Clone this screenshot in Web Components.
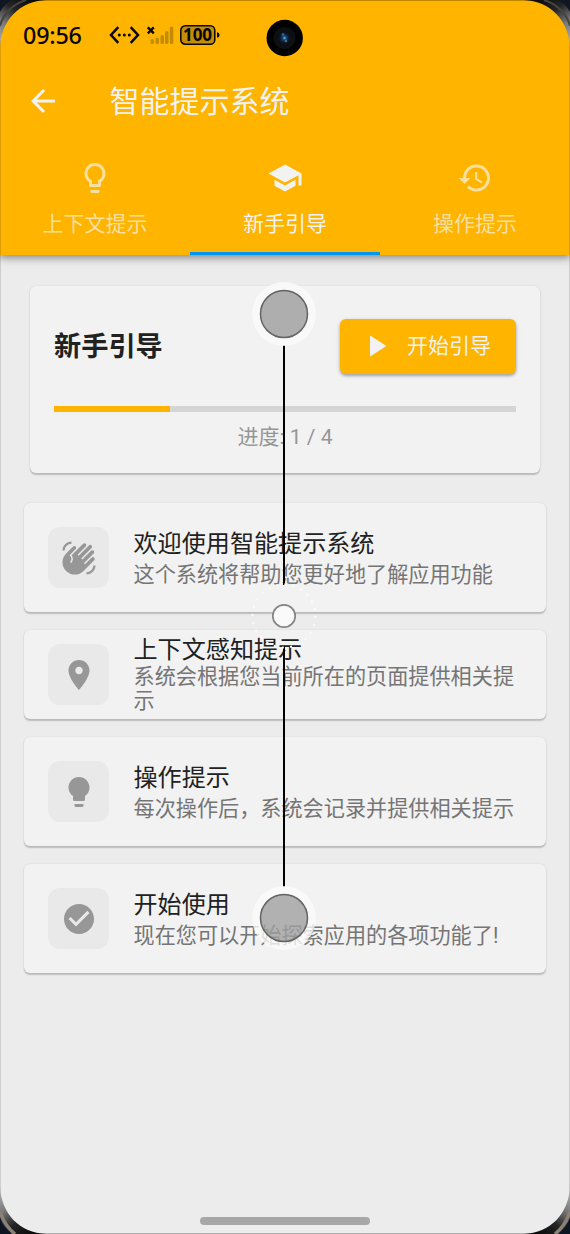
<!DOCTYPE html>
<html lang="zh-CN">
<head>
<meta charset="utf-8">
<title>智能提示系统</title>
<style>
html, body { margin: 0; height: 100%; }
body { font-family: Roboto, "Noto Sans CJK SC", sans-serif; background: #ececec; overflow: hidden; }
</style>
</head>
<body>
<phone-screen></phone-screen>
<script>
const define = (name, html) => {
  const template = document.createElement('template');
  template.innerHTML = html;
  customElements.define(name, class extends HTMLElement {
    constructor() {
      super();
      this.attachShadow({ mode: 'open' }).append(template.content.cloneNode(true));
    }
  });
};

const ICONS = {
  back: 'M20 11H7.83l5.59-5.59L12 4l-8 8 8 8 1.41-1.41L7.83 13H20v-2z',
  bulbOutline: 'M9 21c0 .55.45 1 1 1h4c.55 0 1-.45 1-1v-1H9v1zm3-19C8.14 2 5 5.14 5 9c0 2.38 1.19 4.47 3 5.74V17c0 .55.45 1 1 1h6c.55 0 1-.45 1-1v-2.26c1.81-1.27 3-3.36 3-5.74 0-3.86-3.14-7-7-7zm2.850 11.1l-.85.6V16h-4v-2.3l-.85-.6C7.8 12.16 7 10.63 7 9c0-2.76 2.24-5 5-5s5 2.24 5 5c0 1.63-.8 3.16-2.150 4.1z',
  school: 'M5 13.18v4L12 21l7-3.82v-4L12 17l-7-3.82zM12 3L1 9l11 6 9-4.91V17h2V9L12 3z',
  history: 'M13 3c-4.97 0-9 4.03-9 9H1l3.89 3.89.07.14L9 12H6c0-3.87 3.13-7 7-7s7 3.13 7 7-3.13 7-7 7c-1.93 0-3.68-.79-4.94-2.06l-1.42 1.42C8.27 19.99 10.51 21 13 21c4.97 0 9-4.03 9-9s-4.03-9-9-9zm-1 5v5l4.28 2.54.72-1.21-3.5-2.08V8H12z',
  play: 'M8 5v14l11-7z',
  wave: 'M23,17c0,3.31-2.69,6-6,6v-1.5c2.48,0,4.5-2.02,4.5-4.5H23z M1,7c0-3.31,2.69-6,6-6v1.5C4.52,2.5,2.5,4.52,2.5,7H1z M8.01,4.32l-4.6,4.6c-3.22,3.22-3.22,8.45,0,11.67s8.45,3.22,11.67,0l7.07-7.07c0.49-0.49,0.49-1.28,0-1.77c-0.49-0.49-1.28-0.49-1.77,0l-4.42,4.42l-0.71-0.71l6.54-6.54c0.49-0.49,0.49-1.28,0-1.77s-1.28-0.49-1.77,0l-5.83,5.83l-0.71-0.71l6.89-6.89c0.49-0.49,0.49-1.28,0-1.77s-1.28-0.49-1.77,0l-6.89,6.89L11.02,9.8l5.48-5.48c0.49-0.49,0.49-1.28,0-1.77s-1.28-0.49-1.77,0l-7.62,7.62c1.22,1.57,1.11,3.84-0.33,5.28l-0.71-0.71c1.17-1.17,1.17-3.07,0-4.24l-0.35-0.35l4.07-4.07c0.49-0.49,0.49-1.28,0-1.77C9.29,3.83,8.5,3.83,8.01,4.32z',
  place: 'M12 2C8.13 2 5 5.13 5 9c0 5.25 7 13 7 13s7-7.75 7-13c0-3.87-3.13-7-7-7zm0 9.5c-1.38 0-2.5-1.12-2.5-2.5s1.12-2.5 2.5-2.5 2.5 1.12 2.5 2.5-1.12 2.5-2.5 2.5z',
  bulb: 'M9 21c0 .55.45 1 1 1h4c.55 0 1-.45 1-1v-1H9v1zm3-19C8.14 2 5 5.14 5 9c0 2.38 1.19 4.47 3 5.74V17c0 .55.45 1 1 1h6c.55 0 1-.45 1-1v-2.26c1.81-1.27 3-3.36 3-5.74 0-3.86-3.14-7-7-7z',
  check: 'M12 2C6.48 2 2 6.48 2 12s4.48 10 10 10 10-4.48 10-10S17.52 2 12 2zm-2 15l-5-5 1.41-1.41L10 14.17l7.59-7.59L19 8l-9 9z'
};

customElements.define('md-icon', class extends HTMLElement {
  constructor() {
    super();
    this.attachShadow({ mode: 'open' }).innerHTML =
      `<style>:host{display:block;width:36px;height:36px;flex:none}svg{display:block;width:100%;height:100%;fill:currentColor}</style>
       <svg viewBox="0 0 24 24"><path d="${ICONS[this.getAttribute('name')]}"/></svg>`;
  }
  static get observedAttributes() { return ['name']; }
  attributeChangedCallback() {
    this.shadowRoot.querySelector('path').setAttribute('d', ICONS[this.getAttribute('name')]);
  }
});

define('status-bar', `
<style>
:host{display:flex;height:72px;box-sizing:border-box;padding:22px 0 0 23px;color:#080600}
.time{font:500 23.300px/26px "Noto Sans",sans-serif;width:86px;letter-spacing:-.2px}
svg{display:block;flex:none}
.net{margin-top:2px}
.sig{margin:3px 0 0 7px}
.bat{position:relative;width:39px;height:21px;margin:3px 0 0 6px}
.bat b{position:absolute;left:0;top:0;width:35px;text-align:center;font:700 17px/20px "Noto Sans",sans-serif}
.cam{position:absolute;left:266px;top:19px}
</style>
<div class="time">09:56</div>
<svg class="net" width="31" height="22" viewBox="0 0 31 22" fill="none" stroke="#080600" stroke-width="2.5"><path d="M9.300 3.200 2 11l7.300 7.800M21.700 3.200 29 11l-7.300 7.800"/><g fill="#080600" stroke="none"><circle cx="10.300" cy="11" r="1.500"/><circle cx="15.300" cy="11" r="1.500"/><circle cx="20.300" cy="11" r="1.500"/></g></svg>
<svg class="sig" width="27" height="20" viewBox="0 0 27 20" fill="#c38b03"><path d="M.8 2.300 6.800 8.300M6.800 2.300.8 8.300" stroke="#080600" stroke-width="2.400"/><rect x="3.500" y="14" width="3.500" height="5" rx="1.600"/><rect x="8.500" y="12.500" width="3.500" height="6.500" rx="1.600"/><rect x="13.500" y="10" width="3.500" height="9" rx="1.600"/><rect x="18" y="6" width="3.500" height="13" rx="1.600"/><rect x="22.800" y="1.500" width="3.500" height="17.500" rx="1.600"/></svg>
<div class="bat"><svg width="40" height="20" viewBox="0 0 40 20"><rect x=".8" y=".8" width="34" height="18.400" rx="4.500" fill="#c58d06" stroke="#080600" stroke-width="1.500"/><path d="M37 7.200q2.600.3 2.600 2.800t-2.600 2.800z" fill="#080600"/></svg><b>100</b></div>
<svg class="cam" width="38" height="38" viewBox="0 0 38 38"><defs><radialGradient id="g"><stop offset="0" stop-color="#8cc4ef"/><stop offset=".25" stop-color="#1d4d79"/><stop offset=".65" stop-color="#0b1c30"/><stop offset="1" stop-color="#0c0e13"/></radialGradient></defs><circle cx="18.700" cy="19" r="18.200" fill="#000"/><circle cx="18.500" cy="19" r="11" fill="#0d0f13"/><circle cx="18.500" cy="19" r="6.500" fill="url(#g)"/><circle cx="17" cy="15.500" r="1.300" fill="#326c9b"/><circle cx="20" cy="22" r="1.200" fill="#40749a"/></svg>
`);

define('title-bar', `
<style>
:host{display:flex;align-items:center;height:58px;margin-bottom:2px;padding-left:24.500px;color:#f2f2f2}
span{font-size:30px;line-height:40px;margin-left:49px;padding-top:2px}
</style>
<md-icon name="back"></md-icon><span><slot></slot></span>
`);

define('nav-tab', `
<style>
:host{display:flex;flex-direction:column;align-items:center;flex:1;height:108px;box-sizing:border-box;padding-top:13px;color:#f7dfa0;font-size:21px;line-height:30px;border-bottom:3px solid transparent}
:host([active]){color:#f2f2f2;border-color:#0095f0}
div{margin-top:13px}
</style>
<slot name="icon"></slot><div><slot></slot></div>
`);

define('app-header', `
<style>
:host{display:flex;flex-direction:column;height:255px;background:#ffb400;box-shadow:0 3px 6px rgba(0,0,0,.28),0 5px 9px rgba(0,0,0,.13);position:relative}
nav{display:flex;margin-top:15px}
</style>
<status-bar></status-bar>
<title-bar>智能提示系统</title-bar>
<nav>
<nav-tab><md-icon slot="icon" name="bulbOutline"></md-icon>上下文提示</nav-tab>
<nav-tab active><md-icon slot="icon" name="school"></md-icon>新手引导</nav-tab>
<nav-tab><md-icon slot="icon" name="history"></md-icon>操作提示</nav-tab>
</nav>
`);

define('start-button', `
<style>
:host{display:flex;align-items:center;box-sizing:border-box;width:176px;height:55px;padding:0 0 2px 18px;border-radius:6px;background:#ffb400;color:#f2f2f2;font-size:21px;line-height:30px;box-shadow:0 2px 3px rgba(0,0,0,.26),0 1px 5px rgba(0,0,0,.12)}
span{margin-left:13px}
</style>
<md-icon name="play"></md-icon><span><slot></slot></span>
`);

define('progress-card', `
<style>
:host{display:block;box-sizing:border-box;height:187px;margin:0 6px 30px;padding:33px 24px 0;background:#f2f2f2;border-radius:6px;box-shadow:0 1.500px 1.500px rgba(0,0,0,.2),0 0 2px rgba(0,0,0,.08)}
.row{display:flex;justify-content:space-between;align-items:center}
h2{margin:0;font-size:27.200px;line-height:40px;font-weight:700;color:#212121}
.bar{height:6px;background:#d5d5d5;margin-top:32px}
.fill{width:25%;height:100%;background:#ffb400}
p{margin:10px 0 0;text-align:center;font-size:21px;line-height:30px;color:#969696}
</style>
<div class="row"><h2>新手引导</h2><start-button>开始引导</start-button></div>
<div class="bar"><div class="fill"></div></div>
<p><slot></slot></p>
`);

define('guide-step', `
<style>
:host{display:flex;align-items:center;box-sizing:border-box;height:109px;margin-bottom:18px;padding:0 24px;background:#f2f2f2;border-radius:6px;box-shadow:0 1.500px 1.500px rgba(0,0,0,.2),0 0 2px rgba(0,0,0,.08)}
.icon{flex:none;display:flex;align-items:center;justify-content:center;width:61px;height:61px;border-radius:12px;background:#e9e9e9;color:#979797;margin-right:24.500px}
.title{font-size:24.100px;line-height:31px;color:#212121;white-space:nowrap;position:relative;padding-top:3px}
.sub{font-size:21.150px;line-height:30px;color:#757575;margin-right:-8px}
:host([dense]){height:89px}
:host([dense]) .title{line-height:26px;padding-top:1px}
:host([dense]) .sub{line-height:24px;margin-top:2px}
</style>
<div class="icon"><slot name="icon"></slot></div>
<div><div class="title"><slot name="title"></slot></div><div class="sub"><slot></slot></div></div>
`);

define('gesture-overlay', `
<style>:host{position:absolute;left:248px;top:278px;pointer-events:none}svg{display:block}</style>
<svg width="72" height="676" viewBox="0 0 72 676">
<path d="M36 67V307M36 368V609" stroke="#000" stroke-width="2"/>
<circle cx="36" cy="36" r="32" fill="#fafafa" fill-opacity=".85"/><circle cx="36" cy="36" r="23.500" fill="#aeaeae" stroke="#636363" stroke-width="1.500"/>
<path d="M36 608a32 32 0 1 0 0 64a32 32 0 1 0 0-64zM36 616.500a23.500 23.500 0 1 1 0 47a23.500 23.500 0 1 1 0-47z" fill="#fafafa" fill-opacity=".8" fill-rule="evenodd"/><circle cx="36" cy="640" r="23.500" fill="#a0a0a0" fill-opacity=".8" stroke="#636363" stroke-width="1.500"/>
<circle cx="36" cy="338" r="31.500" fill="none" stroke="#fbfbfb" stroke-width="2" stroke-dasharray="2 6.250"/>
<circle cx="36" cy="338" r="11.200" fill="#fafafa" stroke="#858585" stroke-width="1.700"/>
</svg>
`);

define('device-bezel', `
<style>:host{position:absolute;inset:0;pointer-events:none}svg{display:block}</style>
<svg width="570" height="1234" viewBox="0 0 570 1234">
<defs>
<linearGradient id="t" gradientUnits="userSpaceOnUse" x1="0" y1="48" x2="36" y2="0"><stop offset="0" stop-color="#bbb"/><stop offset=".38" stop-color="#777"/><stop offset=".65" stop-color="#252525"/><stop offset="1" stop-color="#080808"/></linearGradient>
<g id="top"><path d="M0 0H46C20 1 1 20 0 48Z" fill="url(#t)"/><path d="M0 26C3 14 13 4 26 0" fill="none" stroke="#444" stroke-width="2"/><path d="M0 0H12Q4 4 0 12Z" fill="#111722"/></g>
<g id="bot"><path d="M0 0H46C20 1 1 20 0 48Z" fill="url(#t)"/><path d="M0 22Q5 8 15 0" fill="none" stroke="#8b8174" stroke-width="3.500"/><path d="M0 0H11Q3 7 0 17Z" fill="#0e1624"/></g>
</defs>
<path d="M.5 40V1194M569.500 40V1194" stroke="#000" stroke-opacity=".13" fill="none"/><path d="M40 .5H530M40 1233.500H530" stroke="#000" stroke-opacity=".25"/>
<use href="#top"/><use href="#top" transform="translate(570) scale(-1 1)"/>
<use href="#bot" transform="translate(0 1234) scale(1 -1)"/><use href="#bot" transform="translate(570 1234) scale(-1 -1)"/>
</svg>
`);

define('phone-screen', `
<style>
:host{display:flex;flex-direction:column;position:relative;width:570px;height:1234px;background:#ececec;overflow:hidden}
main{flex:1;padding:31px 24px 0}
.home{width:170px;height:8px;border-radius:4px;background:#a7a7a7;align-self:center;margin-bottom:9px}
</style>
<app-header></app-header>
<main>
<progress-card>进度: 1 / 4</progress-card>
<guide-step><md-icon slot="icon" name="wave"></md-icon><span slot="title">欢迎使用智能提示系统</span>这个系统将帮助您更好地了解应用功能</guide-step>
<guide-step dense><md-icon slot="icon" name="place"></md-icon><span slot="title">上下文感知提示</span>系统会根据您当前所在的页面提供相关提示</guide-step>
<guide-step><md-icon slot="icon" name="bulb"></md-icon><span slot="title">操作提示</span>每次操作后，系统会记录并提供相关提示</guide-step>
<guide-step><md-icon slot="icon" name="check"></md-icon><span slot="title">开始使用</span>现在您可以开始探索应用的各项功能了!</guide-step>
</main>
<div class="home"></div>
<gesture-overlay></gesture-overlay>
<device-bezel></device-bezel>
`);
</script>
</body>
</html>
